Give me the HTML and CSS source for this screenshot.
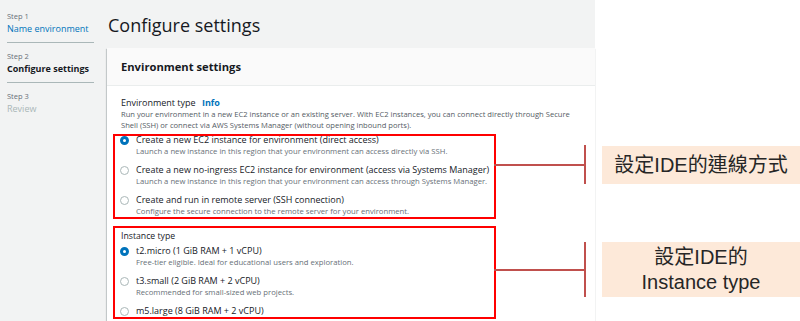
FILE: index.html
```html
<!DOCTYPE html>
<html lang="en">
<head>
<meta charset="utf-8">
<title>Configure settings</title>
<link rel="stylesheet" href="styles.css">
</head>
<body>
<div class="screen">
  <nav class="steps">
    <div class="step">
      <div class="step-num">Step 1</div>
      <div class="step-title link">Name environment</div>
    </div>
    <div class="step">
      <div class="step-num">Step 2</div>
      <div class="step-title current">Configure settings</div>
    </div>
    <div class="step last">
      <div class="step-num">Step 3</div>
      <div class="step-title disabled">Review</div>
    </div>
  </nav>
  <main class="main">
    <h1 class="page-title">Configure settings</h1>
    <section class="card">
      <header class="card-header"><h2>Environment settings</h2></header>
      <div class="card-body">
        <div class="field-label">Environment type <a class="info">Info</a></div>
        <p class="field-desc">Run your environment in a new EC2 instance or an existing server. With EC2 instances, you can connect directly through Secure<br>Shell (SSH) or connect via AWS Systems Manager (without opening inbound ports).</p>
        <div class="redbox env">
          <ul class="opts">
            <li class="opt"><span class="radio on"></span><span class="opt-title">Create a new EC2 instance for environment (direct access)</span><span class="opt-desc">Launch a new instance in this region that your environment can access directly via SSH.</span></li>
            <li class="opt"><span class="radio"></span><span class="opt-title">Create a new no-ingress EC2 instance for environment (access via Systems Manager)</span><span class="opt-desc">Launch a new instance in this region that your environment can access through Systems Manager.</span></li>
            <li class="opt"><span class="radio"></span><span class="opt-title">Create and run in remote server (SSH connection)</span><span class="opt-desc">Configure the secure connection to the remote server for your environment.</span></li>
          </ul>
          <div class="callout c1"><span class="hline"></span><span class="vline"></span><div class="note">設定IDE的連線方式</div></div>
        </div>
        <div class="redbox inst">
          <div class="inst-label">Instance type</div>
          <ul class="opts">
            <li class="opt"><span class="radio on"></span><span class="opt-title">t2.micro (1 GiB RAM + 1 vCPU)</span><span class="opt-desc">Free-tier eligible. Ideal for educational users and exploration.</span></li>
            <li class="opt"><span class="radio"></span><span class="opt-title">t3.small (2 GiB RAM + 2 vCPU)</span><span class="opt-desc">Recommended for small-sized web projects.</span></li>
            <li class="opt"><span class="radio"></span><span class="opt-title">m5.large (8 GiB RAM + 2 vCPU)</span></li>
          </ul>
          <div class="callout c2"><span class="hline"></span><span class="vline"></span><div class="note">設定IDE的<br>Instance type</div></div>
        </div>
      </div>
    </section>
  </main>
</div>
</body>
</html>
```
FILE: styles.css
```css
html, body {
  margin: 0;
  padding: 0;
  overflow: hidden;
  background: #ffffff;
}
body {
  width: 800px;
  height: 321px;
  font-family: "Open Sans", "Noto Sans", sans-serif;
  color: #16191f;
}
.screen {
  width: 595px;
  height: 321px;
  background: #f2f3f3;
  display: flex;
}
.steps {
  flex: none;
  width: 87px;
  margin-left: 7px;
  padding-top: 10px;
}
.step {
  padding-bottom: 7px;
  margin-bottom: 7px;
  border-bottom: 1px solid #aab7b8;
}
.step.last {
  border-bottom: 0;
}
.step-num {
  font-size: 7.5px;
  line-height: 12px;
  color: #687078;
}
.step-title {
  font-size: 9px;
  line-height: 13px;
  white-space: nowrap;
}
.link { color: #0073bb; }
.current { font-weight: 700; }
.disabled { color: #aab7b8; }

.main {
  flex: 1;
  min-width: 0;
  margin-left: 13px;
}
.page-title {
  margin: 11px 0 9px 1px;
  font-size: 18px;
  line-height: 28px;
  font-weight: 400;
}
.card {
  background: #ffffff;
  height: 273px;
  box-shadow: -1px 1px 1px 0 rgba(0, 28, 36, 0.15), 0 1px 1px 0 rgba(0, 28, 36, 0.3);
}
.card-header {
  box-sizing: border-box;
  height: 38px;
  background: #fafafa;
  border-bottom: 1px solid #eaeded;
  display: flex;
  align-items: center;
  padding-left: 14px;
}
.card-header h2 {
  margin: 0;
  font-size: 11.2px;
  font-weight: 700;
}
.card-body {
  padding: 10px 0 0 14px;
}
.field-label {
  font-size: 9px;
  line-height: 13px;
}
.info {
  color: #0073bb;
  font-weight: 700;
  margin-left: 4px;
}
.field-desc {
  margin: 0;
  font-size: 7.6px;
  line-height: 11px;
  color: #545b64;
  white-space: nowrap;
}
.redbox {
  position: relative;
  box-sizing: border-box;
  width: 383px;
  margin-left: -8px;
  border: 2px solid #ff0000;
  padding-left: 6px;
}
.redbox.env { margin-top: 3px; }
.redbox.inst { margin-top: 7px; padding-top: 2px; }
.env .opts { margin-top: -2px; }
.opts {
  list-style: none;
  margin: 0;
  padding: 0;
  display: flex;
  flex-direction: column;
  gap: 7px;
}
.opt {
  display: grid;
  grid-template-columns: 9px 1fr;
  column-gap: 7px;
  margin-left: -1px;
}
.radio {
  box-sizing: border-box;
  width: 9px;
  height: 9px;
  margin-top: 1.5px;
  border-radius: 50%;
  border: 1px solid #aab7b8;
  background: #ffffff;
}
.radio.on {
  border: 3px solid #0073bb;
}
.opt-title {
  font-size: 9px;
  line-height: 12px;
  white-space: nowrap;
}
.opt-desc {
  grid-column: 2;
  font-size: 7.7px;
  line-height: 11px;
  color: #687078;
  white-space: nowrap;
}
.inst-label {
  font-size: 8.7px;
  line-height: 12px;
  margin-bottom: 3px;
}

.callout {
  position: absolute;
  left: 100%;
  display: flex;
  align-items: center;
}
.c1 { top: 9px; height: 39px; }
.c2 { top: 14px; height: 55px; }
.hline {
  width: 90px;
  height: 2px;
  background: #c0504d;
}
.vline {
  width: 2px;
  align-self: stretch;
  background: #c0504d;
}
.note {
  box-sizing: border-box;
  width: 198px;
  margin-left: 16px;
  background: #fde9d9;
  color: #262626;
  font-family: "Liberation Sans", "Noto Sans CJK TC", sans-serif;
  font-size: 20px;
  line-height: 25px;
  text-align: center;
  align-self: stretch;
  display: flex;
  align-items: center;
  justify-content: center;
}
.c1 .note { margin-top: 1px; }
```
